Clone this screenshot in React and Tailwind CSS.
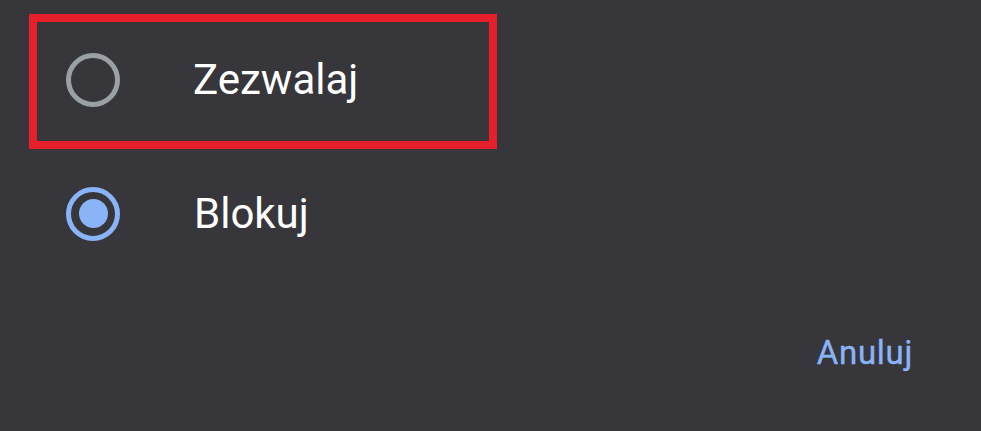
export default function App() {
  return (
    <div className="w-[981px] h-[431px] bg-[#37363b] overflow-hidden relative" style={{ fontFamily: 'Roboto, "Noto Sans", sans-serif' }}>
      <div className="flex flex-col pt-[14px] pl-[29px]">
        <div className="w-[468px] h-[135px] border-[8px] border-[#e5202b] flex items-center pl-[29px] pb-[3px]">
          <div className="w-[54px] h-[54px] rounded-full border-[5px] border-[#9aa0a6] shrink-0" />
          <span className="ml-[73px] text-white text-[42px] leading-none">Zezwalaj</span>
        </div>
        <div className="w-[468px] h-[135px] border-[8px] border-transparent flex items-center pl-[29px] pb-[6px]">
          <div className="w-[54px] h-[54px] rounded-full border-[5px] border-[#8ab4f8] shrink-0 flex items-center justify-center">
            <div className="w-[29px] h-[29px] rounded-full bg-[#8ab4f8]" />
          </div>
          <span className="ml-[74px] text-white text-[42px] leading-none">Blokuj</span>
        </div>
      </div>
      <div className="flex justify-end pr-[68px] mt-[52px]">
        <span className="text-[#8ab4f8] text-[33px] font-normal tracking-[0.7px] leading-none" style={{ WebkitTextStroke: '0.4px #8ab4f8' }}>Anuluj</span>
      </div>
    </div>
  );
}
